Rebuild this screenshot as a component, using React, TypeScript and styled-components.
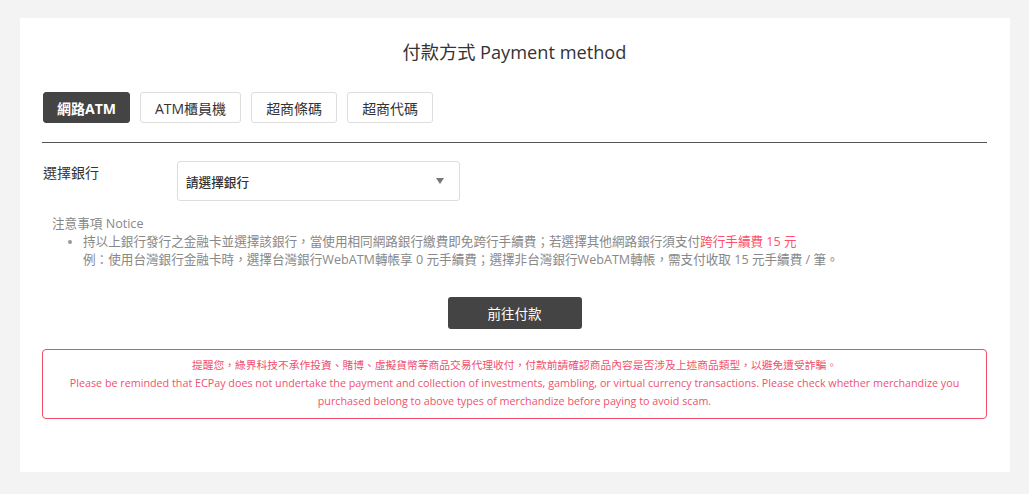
import React from 'react';
import styled, {createGlobalStyle} from 'styled-components';

const GlobalStyle = createGlobalStyle`
  body {
    margin: 0;
    background: #f3f3f3;
    font-family: "Open Sans", "Noto Sans CJK TC", sans-serif;
    color: #333;
  }
`;

const Page = styled.div`
  padding: 18px 19px 23px 20px;
`;

const Card = styled.section`
  background: #fff;
  padding: 22px 23px 53px 22px;
`;

const Title = styled.h1`
  margin: 0;
  text-align: center;
  font-size: 18.2px;
  line-height: 24px;
  font-weight: 400;
  color: #333;
`;

const Tabs = styled.div`
  display: flex;
  gap: 10px;
  margin-top: 28px;
  padding-left: 1px;
  padding-bottom: 19px;
  border-bottom: 1px solid #555;
`;

const Tab = styled.button<{ $active?: boolean }>`
  height: 31px;
  padding: 0 ${p => (p.$active ? 13 : 14)}px;
  border-radius: 3px;
  border: 1px solid ${p => (p.$active ? '#444' : '#ddd')};
  background: ${p => (p.$active ? '#444' : '#fff')};
  color: ${p => (p.$active ? '#fff' : '#333')};
  font-family: inherit;
  font-size: 14px;
  font-weight: ${p => (p.$active ? 700 : 400)};
`;

const BankRow = styled.div`
  display: flex;
  align-items: flex-start;
  margin-top: 18px;
`;

const Label = styled.div`
  width: 134px;
  padding-left: 1px;
  padding-top: 2px;
  font-size: 14px;
  line-height: 20px;
`;

const Select = styled.div`
  width: 283px;
  height: 40px;
  box-sizing: border-box;
  border: 1px solid #ddd;
  border-radius: 3px;
  display: flex;
  align-items: center;
  justify-content: space-between;
  padding: 0 15px 0 8px;
  font-size: 12.6px;
  font-weight: 500;
  color: #333;
`;

const Arrow = styled.span`
  width: 0;
  height: 0;
  border-left: 4px solid transparent;
  border-right: 4px solid transparent;
  border-top: 6px solid #777;
`;

const Notice = styled.div`
  margin-top: 14px;
  font-size: 12.6px;
  line-height: 18px;
  color: #888;
`;

const NoticeTitle = styled.div`
  padding-left: 10px;
`;

const NoticeList = styled.ul`
  margin: 0;
  padding-left: 41px;

  li::marker {
    color: #999;
    font-size: 11px;
  }
`;

const Red = styled.span`
  color: #ff4f6b;
`;

const Actions = styled.div`
  display: flex;
  justify-content: center;
  margin-top: 28px;
`;

const PayButton = styled.button`
  width: 134px;
  height: 32px;
  border: none;
  border-radius: 3px;
  background: #444;
  color: #fff;
  font-family: inherit;
  font-size: 13.5px;
`;

const Warning = styled.div`
  margin-top: 20px;
  border: 1px solid #f24e6a;
  border-radius: 4px;
  padding: 6px 8px 8px;
  text-align: center;
  font-size: 10.75px;
  line-height: 18px;
  color: #f0506e;
  white-space: nowrap;
`;

const tabs = ['網路ATM', 'ATM櫃員機', '超商條碼', '超商代碼'];

const App: React.FC = () => {
    return (
        <Page>
            <GlobalStyle/>
            <Card>
                <Title>付款方式 Payment method</Title>
                <Tabs>
                    {tabs.map((t, i) => (
                        <Tab key={t} $active={i === 0}>{t}</Tab>
                    ))}
                </Tabs>
                <BankRow>
                    <Label>選擇銀行</Label>
                    <Select>
                        <span>請選擇銀行</span>
                        <Arrow/>
                    </Select>
                </BankRow>
                <Notice>
                    <NoticeTitle>注意事項 Notice</NoticeTitle>
                    <NoticeList>
                        <li>
                            持以上銀行發行之金融卡並選擇該銀行，當使用相同網路銀行繳費即免跨行手續費；若選擇其他網路銀行須支付<Red>跨行手續費 15 元</Red>
                            <br/>
                            例：使用台灣銀行金融卡時，選擇台灣銀行WebATM轉帳享 0 元手續費；選擇非台灣銀行WebATM轉帳，需支付收取 15 元手續費 / 筆。
                        </li>
                    </NoticeList>
                </Notice>
                <Actions>
                    <PayButton>前往付款</PayButton>
                </Actions>
                <Warning>
                    提醒您，綠界科技不承作投資、賭博、虛擬貨幣等商品交易代理收付，付款前請確認商品內容是否涉及上述商品類型，以避免遭受詐騙。
                    <br/>
                    Please be reminded that ECPay does not undertake the payment and collection of investments, gambling, or virtual currency transactions. Please check whether merchandize you
                    <br/>
                    purchased belong to above types of merchandize before paying to avoid scam.
                </Warning>
            </Card>
        </Page>
    );
};

export default App;
